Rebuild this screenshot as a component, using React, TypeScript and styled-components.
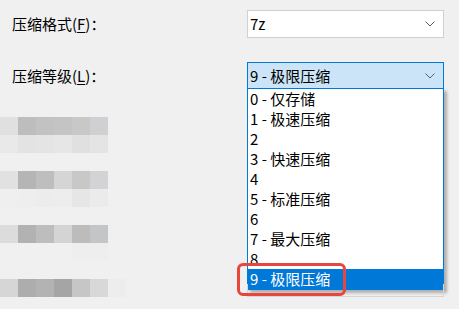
import styled, { createGlobalStyle } from "styled-components";

const Global = createGlobalStyle`
  html, body { margin: 0; background: #f0f0f0; }
  body {
    font-family: "Noto Sans CJK SC", "Noto Sans", sans-serif;
    font-size: 15px;
    color: #000;
    overflow: hidden;
  }
`;

const Page = styled.div`
  width: 459px;
  height: 309px;
  padding-top: 10px;
  box-sizing: border-box;
`;

const Form = styled.div`
  display: flex;
  flex-direction: column;
  gap: 24px;
  padding-left: 12px;
`;

const Row = styled.div`
  display: grid;
  grid-template-columns: 235px 197px;
  align-items: center;
`;

const Label = styled.label`
  line-height: 20px;
  u { text-decoration: underline; text-underline-offset: 2px; }
`;

const Combo = styled.div<{ $active?: boolean }>`
  position: relative;
  height: 28px;
  box-sizing: border-box;
  border: 1px solid ${(p) => (p.$active ? "#0078d7" : "#d0d0d0")};
  background: ${(p) => (p.$active ? "#cce4f7" : "#fff")};
  display: flex;
  align-items: center;
  justify-content: space-between;
  padding: 0 8px 0 2px;
  line-height: 20px;
`;

const Chevron = () => (
  <svg width="10" height="6" viewBox="0 0 10 6">
    <polyline points="0.5,0.5 5,5 9.5,0.5" fill="none" stroke="#606060" strokeWidth="1" />
  </svg>
);

const List = styled.ul`
  position: absolute;
  top: calc(100% - 1px);
  left: -1px;
  right: -1px;
  margin: 0;
  padding: 0;
  list-style: none;
  background: #fff;
  border: 1px solid #0078d7;
  box-shadow: 3px 3px 3px rgba(0, 0, 0, 0.28);
  z-index: 2;

  &::after {
    content: "";
    position: absolute;
    left: -1px;
    right: -1px;
    bottom: -8px;
    height: 12px;
    border: 1px solid #d6d6d6;
    border-top: none;
    z-index: -1;
  }
`;

const Item = styled.li<{ $selected?: boolean }>`
  position: relative;
  height: 20px;
  line-height: 20px;
  padding-left: 2px;
  background: ${(p) => (p.$selected ? "#0078d7" : "transparent")};
  color: ${(p) => (p.$selected ? "#fff" : "#000")};
  white-space: nowrap;
`;

const Mark = styled.span`
  position: absolute;
  left: -11px;
  top: -6px;
  width: 109px;
  height: 33px;
  box-sizing: border-box;
  border: 3px solid #e8453c;
  border-radius: 6px;
  pointer-events: none;
`;

const Mosaic = styled.div`
  margin-top: 27px;
  display: grid;
  grid-template-columns: repeat(7, 18px);
  grid-auto-rows: 18px;
`;

const Cell = styled.div<{ $c: string }>`
  background: ${(p) => p.$c};
`;

const levels = [
  "0 - 仅存储",
  "1 - 极速压缩",
  "2",
  "3 - 快速压缩",
  "4",
  "5 - 标准压缩",
  "6",
  "7 - 最大压缩",
  "8",
  "9 - 极限压缩",
];

const bg = "#f0f0f0";
const mosaic: string[][] = [
  ["#e0e0e0", "#bdbdbd", "#c2c2c2", "#c4c4c4", "#c8c8c6", "#d0d0d2", bg],
  ["#e9e9e9", "#e3e3e3", "#e4e4e4", "#e6e6e6", "#e0e0e0", "#e4e4e4", bg],
  [bg, bg, bg, bg, bg, bg, bg],
  ["#e1e1e1", "#b5b5b5", "#bebebe", "#d5d5d5", "#c8c8c6", "#d3d3d5", bg],
  ["#efefef", "#eeeeee", "#ececec", "#ededed", "#e6e6e6", "#ebebeb", bg],
  [bg, bg, bg, bg, bg, bg, bg],
  ["#dcdcdc", "#b2b2b2", "#bdbdbd", "#d4d4d4", "#bdbcba", "#c4c5c7", bg],
  [bg, bg, bg, bg, "#eeeeee", "#eeeeee", bg],
  [bg, bg, bg, bg, bg, bg, bg],
  ["#d6d6d6", "#adadad", "#b3b3b3", "#a5a5a5", "#c6c6c6", "#d8d8d8", "#ededed"],
];

export default function App() {
  return (
    <Page>
      <Global />
      <Form>
        <Row>
          <Label>
            压缩格式(<u>F</u>)：
          </Label>
          <Combo>
            <span>7z</span>
            <Chevron />
          </Combo>
        </Row>
        <Row>
          <Label>
            压缩等级(<u>L</u>)：
          </Label>
          <Combo $active>
            <span>9 - 极限压缩</span>
            <Chevron />
            <List>
              {levels.map((l, i) => (
                <Item key={l} $selected={i === 9}>
                  {l}
                  {i === 9 && <Mark />}
                </Item>
              ))}
            </List>
          </Combo>
        </Row>
      </Form>
      <Mosaic>
        {mosaic.flatMap((row, r) => row.map((c, i) => <Cell key={r + "-" + i} $c={c} />))}
      </Mosaic>
    </Page>
  );
}
